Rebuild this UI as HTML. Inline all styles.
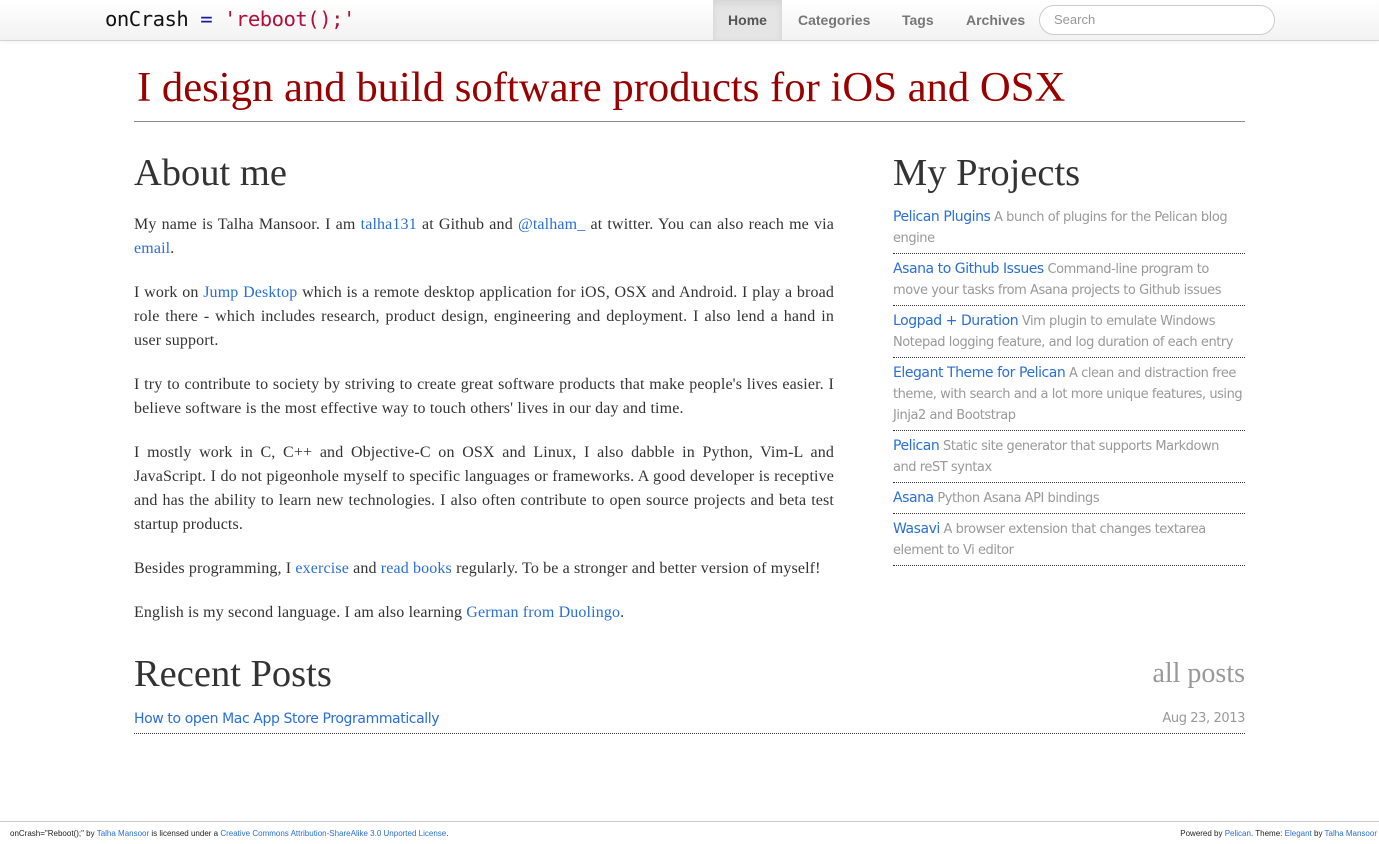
<!DOCTYPE html>
<html><head><meta charset="utf-8"><style>
*{box-sizing:border-box}
body{margin:0;background:#fff;width:1379px;height:844px;position:relative;overflow:hidden}
a{color:#2a6fd6;text-decoration:none}
.nav{position:absolute;left:0;top:0;width:1379px;height:41px;background:linear-gradient(#fff,#f2f2f2);border-bottom:1px solid #d4d4d4;box-shadow:0 1px 4px rgba(0,0,0,.06)}
.brand{position:absolute;left:105px;top:7px;font:20.6px "DejaVu Sans Mono","Liberation Mono",monospace;color:#111;letter-spacing:-0.5px}
.brand .eq{color:#1a1a9a}.brand .s{color:#b0103a}
.nav .item{position:absolute;top:0;height:40px;font:bold 14px "Liberation Sans",sans-serif;line-height:40px;color:#777}
.nav .home{left:713px;width:69px;text-align:center;background:#e5e5e5;color:#555;box-shadow:inset 0 3px 8px rgba(0,0,0,.08)}
.search{position:absolute;left:1039px;top:5px;width:236px;height:30px;border:1px solid #ccc;border-radius:15px;background:#fff;font:13px "Liberation Sans",sans-serif;color:#999;padding:6px 14px}
.title{position:absolute;left:137px;top:63px;font:42.7px "Liberation Serif",serif;color:#990000;white-space:nowrap}
.hr{position:absolute;left:134px;top:121px;width:1111px;height:1px;background:#888}
h2{margin:0;font-weight:normal;font-family:"Liberation Serif",serif;color:#333;position:absolute;white-space:nowrap}
.about{left:134px;top:151px;font-size:38.5px}
.main{position:absolute;left:134px;top:213px;width:700px;font:16px/24px "Liberation Serif",serif;letter-spacing:0.14px;color:#333;text-align:justify}
.main p{margin:0 0 20px}
.proj{left:893px;top:151px;font-size:38.5px}
.side{position:absolute;left:893px;top:206px;width:352px;font:14px/21px "DejaVu Sans","Liberation Sans",sans-serif;color:#999;letter-spacing:-0.45px}
.side div{padding:1px 0 4px;border-bottom:1px dotted #333;margin-bottom:4px;font-size:13px}
.side a{font-size:14px}
.recent{left:134px;top:652px;font-size:38.5px}
.all{position:absolute;right:134px;top:658px;font:28px "Liberation Serif",serif;color:#999}
.post{position:absolute;left:134px;top:708px;width:1111px;height:26px;border-bottom:1px dotted #333;font:14px/22px "DejaVu Sans","Liberation Sans",sans-serif;letter-spacing:-0.4px}
.post span{position:absolute;right:0;top:0;color:#999;font-size:13px}
.foot{position:absolute;left:0;top:821px;width:1379px;border-top:1px solid #ccc;font:8px "Liberation Sans",sans-serif;color:#222;height:23px}
.foot .l{position:absolute;left:10px;top:7px}.foot .r{position:absolute;right:2px;top:7px;white-space:nowrap}
</style></head><body>
<div class="nav">
<div class="brand">onCrash <span class="eq">=</span> <span class="s">'reboot();'</span></div>
<div class="item home">Home</div>
<div class="item" style="left:798px">Categories</div>
<div class="item" style="left:902px">Tags</div>
<div class="item" style="left:966px">Archives</div>
<div class="search">Search</div>
</div>
<div class="title">I design and build software products for iOS and OSX</div>
<div class="hr"></div>
<h2 class="about">About me</h2>
<div class="main">
<p>My name is Talha Mansoor. I am <a>talha131</a> at Github and <a>@talham_</a> at twitter. You can also reach me via <a>email</a>.</p>
<p>I work on <a>Jump Desktop</a> which is a remote desktop application for iOS, OSX and Android. I play a broad role there - which includes research, product design, engineering and deployment. I also lend a hand in user support.</p>
<p>I try to contribute to society by striving to create great software products that make people's lives easier. I believe software is the most effective way to touch others' lives in our day and time.</p>
<p>I mostly work in C, C++ and Objective-C on OSX and Linux, I also dabble in Python, Vim-L and JavaScript. I do not pigeonhole myself to specific languages or frameworks. A good developer is receptive and has the ability to learn new technologies. I also often contribute to open source projects and beta test startup products.</p>
<p>Besides programming, I <a>exercise</a> and <a>read books</a> regularly. To be a stronger and better version of myself!</p>
<p>English is my second language. I am also learning <a>German from Duolingo</a>.</p>
</div>
<h2 class="proj">My Projects</h2>
<div class="side">
<div><a>Pelican Plugins</a> A bunch of plugins for the Pelican blog engine</div>
<div><a>Asana to Github Issues</a> Command-line program to move your tasks from Asana projects to Github issues</div>
<div><a>Logpad + Duration</a> Vim plugin to emulate Windows Notepad logging feature, and log duration of each entry</div>
<div><a>Elegant Theme for Pelican</a> A clean and distraction free theme, with search and a lot more unique features, using Jinja2 and Bootstrap</div>
<div><a>Pelican</a> Static site generator that supports Markdown and reST syntax</div>
<div><a>Asana</a> Python Asana API bindings</div>
<div><a>Wasavi</a> A browser extension that changes textarea element to Vi editor</div>
</div>
<h2 class="recent">Recent Posts</h2>
<div class="all">all posts</div>
<div class="post"><a>How to open Mac App Store Programmatically</a><span>Aug 23, 2013</span></div>
<div class="foot"><div class="l">onCrash="Reboot();" by <a>Talha Mansoor</a> is licensed under a <a>Creative Commons Attribution-ShareAlike 3.0 Unported License</a>.</div><div class="r">Powered by <a>Pelican</a>. Theme: <a>Elegant</a> by <a>Talha Mansoor</a></div></div>
</body></html>
